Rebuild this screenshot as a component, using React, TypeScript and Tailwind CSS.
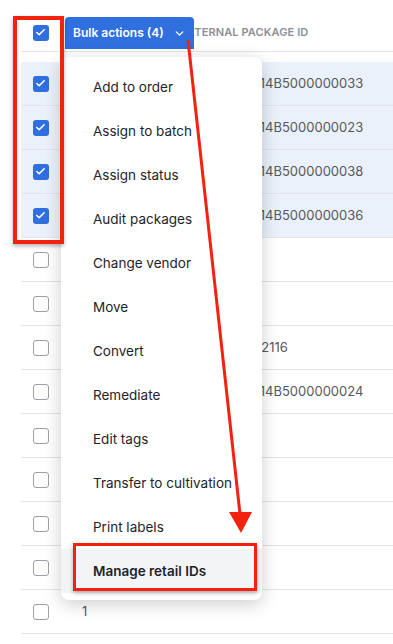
import { ChevronDown, Check } from "lucide-react";

const rows = [
  { sel: true, qty: "", id: "1A4060300014B5000000033" },
  { sel: true, qty: "", id: "1A4060300014B5000000023" },
  { sel: true, qty: "", id: "1A4060300014B5000000038" },
  { sel: true, qty: "", id: "1A4060300014B5000000036" },
  { sel: false, qty: "", id: "" },
  { sel: false, qty: "", id: "" },
  { sel: false, qty: "", id: "PKG-0000032116" },
  { sel: false, qty: "", id: "1A4060300014B5000000024" },
  { sel: false, qty: "", id: "" },
  { sel: false, qty: "", id: "" },
  { sel: false, qty: "", id: "" },
  { sel: false, qty: "", id: "" },
  { sel: false, qty: "1", id: "" },
];

const actions = [
  "Add to order",
  "Assign to batch",
  "Assign status",
  "Audit packages",
  "Change vendor",
  "Move",
  "Convert",
  "Remediate",
  "Edit tags",
  "Transfer to cultivation",
  "Print labels",
  "Manage retail IDs",
];

function Box({ checked }: { checked: boolean }) {
  if (checked) {
    return (
      <div className="w-4 h-4 rounded-[3px] bg-[#2f6fde] flex items-center justify-center">
        <Check size={11} strokeWidth={3.5} color="white" />
      </div>
    );
  }
  return <div className="w-4 h-4 rounded-[3px] border border-[#9ca0a6] bg-white" />;
}

export default function App() {
  return (
    <div
      className="relative w-[393px] h-[644px] overflow-hidden bg-white text-[#1f2329]"
      style={{ fontFamily: "Inter, 'Noto Sans', sans-serif" }}
    >
      {/* table */}
      <div className="pl-[21px]">
        <div className="h-[52px] pt-[14px] border-b border-[#e3e5e8] flex items-center">
          <div className="w-[39px] flex justify-center">
            <Box checked />
          </div>
          <div className="w-[120px]" />
          <div className="text-[11px] font-semibold tracking-[0.1px] text-[#8b9098] uppercase whitespace-nowrap">
            External package ID
          </div>
        </div>

        <div className="mt-[10px]">
          {rows.map((r, i) => (
            <div
              key={i}
              className={`h-[44px] border-b border-[#e3e5e8] flex items-center ${
                r.sel ? "bg-[#eaf1fb]" : "bg-white"
              }`}
            >
              <div className="w-[39px] flex justify-center">
                <Box checked={r.sel} />
              </div>
              <div className="w-[120px] pl-[22px] text-[13px] text-[#55595f]">{r.qty}</div>
              <div className="text-[13px] text-[#55595f] whitespace-nowrap">{r.id}</div>
            </div>
          ))}
        </div>
      </div>

      {/* bulk actions button */}
      <div className="absolute left-[65px] top-[17px] w-[129px] h-[32px] bg-[#2f6fde] rounded-t-[4px] flex items-center pl-[8px] gap-[9px] text-white">
        <span className="text-[12px] font-semibold whitespace-nowrap">Bulk actions (4)</span>
        <ChevronDown size={13} strokeWidth={2.5} />
      </div>

      {/* dropdown menu */}
      <div className="absolute left-[61px] top-[57px] w-[201px] bg-white rounded-[8px] pt-[8px] pb-[7px] shadow-[0_4px_18px_rgba(0,0,0,0.2)]">
        {actions.map((a, i) => {
          const last = i === actions.length - 1;
          return (
            <div
              key={a}
              className={`h-[44px] flex items-center pl-[32px] text-[13.5px] whitespace-nowrap ${
                last ? "bg-[#f3f4f6] font-semibold" : ""
              }`}
            >
              {a}
            </div>
          );
        })}
      </div>

      {/* annotations */}
      <div className="absolute left-[13px] top-[16px] w-[51px] h-[228px] border-[4px] border-[#f3220f] shadow-[0_2px_4px_rgba(0,0,0,0.3)]" />
      <div className="absolute left-[73px] top-[543px] w-[184px] h-[48px] border-[3px] border-[#f3220f] shadow-[0_2px_4px_rgba(0,0,0,0.3)]" />
      <svg className="absolute left-0 top-0" width="393" height="644">
        <line x1="188" y1="40" x2="240" y2="514" stroke="#f3220f" strokeWidth="3" />
        <polygon points="229,512 252,512 241,533" fill="#f3220f" />
      </svg>
    </div>
  );
}
